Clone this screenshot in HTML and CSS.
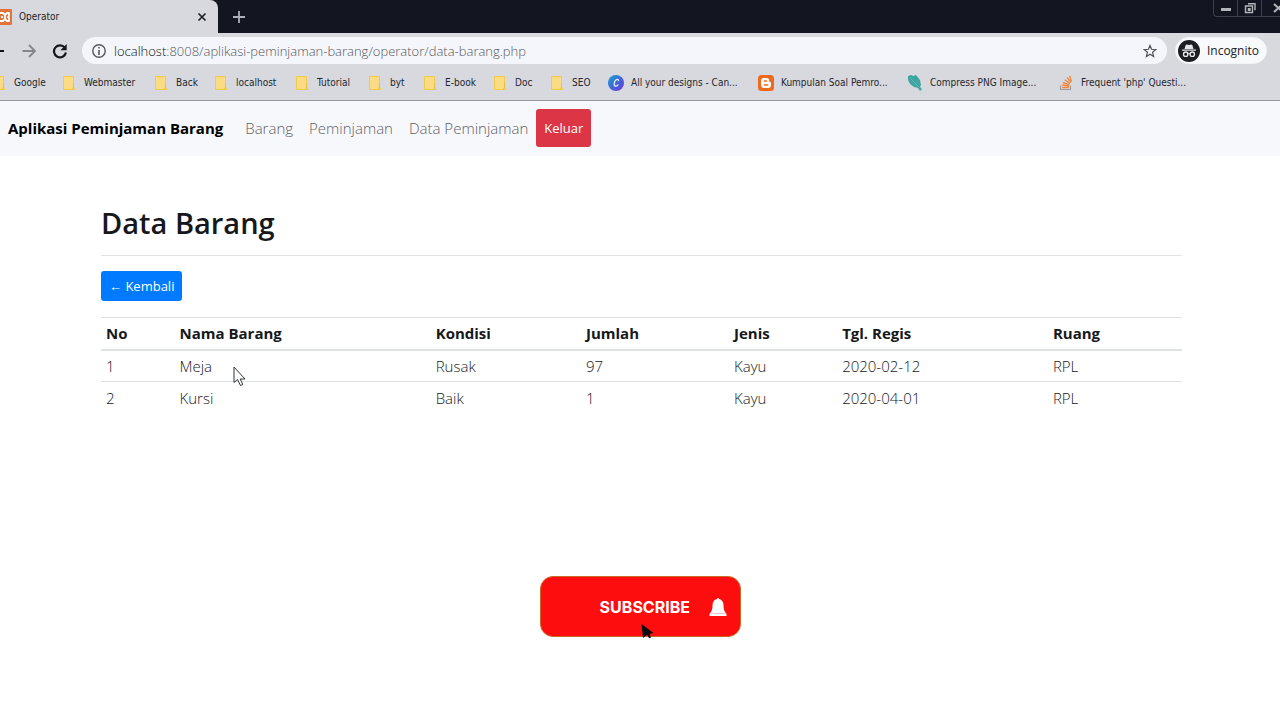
FILE: index.html
```html
<!DOCTYPE html>
<html lang="id">
<head>
<meta charset="utf-8">
<title>Operator</title>
<link rel="stylesheet" href="styles.css">
</head>
<body>
<svg class="defs" width="0" height="0" aria-hidden="true">
  <symbol id="folder" viewBox="0 0 16 16"><path d="M2.500 1.500h10v10.500l1.500 2.500h-11.500z" fill="#fbdc85" stroke="#f2cb4d"/><path d="M12.500 8v4l-1 2.500" fill="none" stroke="#e8bd3c"/></symbol>
</svg>
<header class="chrome">
  <div class="tabstrip">
    <div class="tab">
      <svg class="favicon" width="16" height="16" viewBox="0 0 16 16"><rect width="16" height="16" rx="1" fill="#e2733a"/><path d="M4 4h3l2 2 2-2h2v3l-1 1 1 1v3h-2l-2-2-2 2H4M5 8h2M9 6v4" fill="none" stroke="#fff" stroke-width="1.800" stroke-linejoin="round"/></svg>
      <span class="tab-title">Operator</span>
      <button class="plain" aria-label="Tutup tab"><svg width="10" height="10" viewBox="0 0 10 10"><path d="M1.500 1.500l7 7M8.500 1.500l-7 7" stroke="#202124" stroke-width="1.700"/></svg></button>
    </div>
    <button class="plain new-tab" aria-label="Tab baru"><svg width="14" height="14" viewBox="0 0 14 14"><path d="M7 1v12M1 7h12" stroke="#aeb0b8" stroke-width="1.800"/></svg></button>
    <div class="window-controls">
      <button class="win" aria-label="Minimalkan"><svg width="12" height="12" viewBox="0 0 12 12"><path d="M1 7.500h10" stroke="#b4b5ba" stroke-width="3"/></svg></button>
      <button class="win" aria-label="Pulihkan"><svg width="12" height="12" viewBox="0 0 12 12"><path d="M4 1.700h7v6.500M1.500 4h7v6.500h-7zM4.500 6.700h1.500v1.500h-1.500z" fill="none" stroke="#b4b5ba" stroke-width="1.400"/></svg></button>
      <button class="win win-close" aria-label="Tutup"><svg width="12" height="12" viewBox="0 0 12 12"><path d="M1 2l9 8M10 2l-9 8" stroke="#b4b5ba" stroke-width="2"/></svg></button>
    </div>
  </div>
  <div class="toolbar">
    <button class="plain back" aria-label="Kembali"><svg width="16" height="16" viewBox="0 0 16 16"><path d="M15 8H2M8 2L2 8l6 6" fill="none" stroke="#111217" stroke-width="2"/></svg></button>
    <button class="plain forward" aria-label="Maju"><svg width="16" height="16" viewBox="0 0 16 16"><path d="M1.500 8h12M8 2l6 6-6 6" fill="none" stroke="#85868b" stroke-width="1.800"/></svg></button>
    <button class="plain reload" aria-label="Muat ulang"><svg width="16" height="16" viewBox="0 0 16 16"><path d="M13 5A6 6 0 1 0 13.900 9.500" fill="none" stroke="#15161a" stroke-width="2.200"/><path d="M14.700 1v6.300H8.400z" fill="#15161a"/></svg></button>
    <form class="address">
      <svg width="14" height="14" viewBox="0 0 14 14"><circle cx="7" cy="7" r="6.200" fill="none" stroke="#56585e" stroke-width="1.400"/><path d="M7 3v1.600M7 6v5" stroke="#56585e" stroke-width="1.600"/></svg>
      <div class="url" role="textbox" aria-label="Alamat"><span class="host">localhost</span>:8008/aplikasi-peminjaman-barang/operator/data-barang.php</div>
      <button type="button" class="plain" aria-label="Tandai"><svg width="14" height="14" viewBox="0 0 14 14"><path d="M7 1.500l1.600 3.800 4.100.3-3.100 2.700 1 4.100L7 10.200l-3.600 2.200 1-4.100L1.300 5.600l4.100-.3z" fill="none" stroke="#4f5157" stroke-width="1.200"/></svg></button>
    </form>
    <button class="incognito"><svg width="22" height="22" viewBox="0 0 22 22"><circle cx="11" cy="11" r="11" fill="#1d1e22"/><path d="M6.500 9l1.200-4 1-.5 2.300.6 2.300-.6 1 .5 1.200 4zM4 9.500h14v1.300H4z" fill="#e8e8ea"/><circle cx="7.700" cy="14.200" r="2.200" fill="none" stroke="#e8e8ea" stroke-width="1.300"/><circle cx="14.300" cy="14.200" r="2.200" fill="none" stroke="#e8e8ea" stroke-width="1.300"/><path d="M9.500 14q1.500-1 3 0" fill="none" stroke="#e8e8ea"/></svg>Incognito</button>
  </div>
  <nav class="bookmarks" aria-label="Bookmark">
    <a href="#"><svg><use href="#folder"/></svg>Google</a>
    <a href="#"><svg><use href="#folder"/></svg>Webmaster</a>
    <a href="#"><svg><use href="#folder"/></svg>Back</a>
    <a href="#"><svg><use href="#folder"/></svg>localhost</a>
    <a href="#"><svg><use href="#folder"/></svg>Tutorial</a>
    <a href="#"><svg><use href="#folder"/></svg>byt</a>
    <a href="#"><svg><use href="#folder"/></svg>E-book</a>
    <a href="#"><svg><use href="#folder"/></svg>Doc</a>
    <a href="#"><svg><use href="#folder"/></svg>SEO</a>
    <a href="#"><svg viewBox="0 0 16 16"><defs><linearGradient id="canva" x1="0" y1="0" x2="1" y2="1"><stop offset="0" stop-color="#18a5cf"/><stop offset=".5" stop-color="#3f68d8"/><stop offset="1" stop-color="#7433dc"/></linearGradient></defs><circle cx="8" cy="8" r="8" fill="url(#canva)"/><path d="M10.500 6c.3-2-1.500-2-2.600-1C6 6.700 5.500 10.500 7.300 11c1.200.3 2.300-.5 3-1.500" fill="none" stroke="#e5efff" stroke-width="1.300"/></svg>All your designs - Can...</a>
    <a href="#"><svg viewBox="0 0 16 16"><rect width="16" height="16" rx="3.500" fill="#ef6a1d"/><path d="M6.200 3h2.300a2.700 2.700 0 0 1 2.700 2.700c0 .9.300 1.200 1 1.200.6 0 .8.400.8.900v2.300a2.900 2.900 0 0 1-2.900 2.900H6.200A3.200 3.200 0 0 1 3 9.800V6.200A3.200 3.200 0 0 1 6.200 3z" fill="#fff"/><path d="M6.300 6h2.200M6.300 10h3.500" stroke="#ef6a1d" stroke-width="1.400" stroke-linecap="round"/></svg>Kumpulan Soal Pemro...</a>
    <a href="#"><svg viewBox="0 0 16 16"><path d="M1 1l3-1 2 1 3-1 4 5 1 5-1 2 2 2-2 2-2-3-4-1-4-3-2-4z" fill="#3fa5a2"/><path d="M3 3l9 9" stroke="#72bfba" stroke-width=".7"/></svg>Compress PNG Image...</a>
    <a href="#"><svg viewBox="0 0 16 16"><path d="M2.500 10.500v4h10v-4" fill="none" stroke="#9c9ea3" stroke-width="1.200"/><path d="M4 12.500h7M4.200 10l6.800 1M5 7.500l6.300 2.300M6.800 4.700l5.200 4M9.200 2.300l3.500 5.200M11.800.8l1.600 6" stroke="#f08a45" stroke-width="1.400"/></svg>Frequent 'php' Questi...</a>
  </nav>
</header>
<nav class="navbar">
  <a class="brand" href="#">Aplikasi Peminjaman Barang</a>
  <a class="nav-link" href="#">Barang</a>
  <a class="nav-link" href="#">Peminjaman</a>
  <a class="nav-link" href="#">Data Peminjaman</a>
  <a class="btn btn-danger" href="#">Keluar</a>
</nav>
<main class="content">
  <h1>Data Barang</h1>
  <a class="btn btn-primary" href="#">← Kembali</a>
  <table>
    <colgroup><col class="c-no"><col class="c-name"><col class="c-cond"><col class="c-qty"><col class="c-kind"><col class="c-date"><col></colgroup>
    <thead><tr><th>No</th><th>Nama Barang</th><th>Kondisi</th><th>Jumlah</th><th>Jenis</th><th>Tgl. Regis</th><th>Ruang</th></tr></thead>
    <tbody>
      <tr><td>1</td><td>Meja</td><td>Rusak</td><td>97</td><td>Kayu</td><td>2020-02-12</td><td>RPL</td></tr>
      <tr><td>2</td><td>Kursi</td><td>Baik</td><td>1</td><td>Kayu</td><td>2020-04-01</td><td>RPL</td></tr>
    </tbody>
  </table>
</main>
<button class="subscribe">SUBSCRIBE<svg width="18" height="20" viewBox="0 0 18 20"><path d="M8 2a1 1 0 0 1 2 0c3 .7 4.500 3 4.500 6 0 4 .5 6 3 9v2H.500v-2c2.500-3 3-5 3-9C3.500 5 5 2.700 8 2z" fill="#fff"/><path d="M2 16.500h14" stroke="#ffb3b3" stroke-width=".8"/></svg></button>
<svg class="pointer pointer-light" width="13" height="21" viewBox="0 0 13 21"><path d="M1 1v15.500l3.500-3 3 6 2.300-1-2.600-5.500H12z" fill="#fff" stroke="#33343a"/></svg>
<svg class="pointer pointer-dark" width="13" height="15" viewBox="0 0 13 15"><path d="M.5 0L12.500 9l-4 .7 1.500 3.800-2 .8-1.800-3.700L2 14z" fill="#0a0a0a"/></svg>
</body>
</html>
```

FILE: styles.css
```css
* { box-sizing: border-box; }
body {
  margin: 0;
  background: #fff;
  color: #212529;
  font-family: "Open Sans", "Noto Sans", sans-serif;
  font-size: 15px;
  font-weight: 300;
  overflow: hidden;
}
a { text-decoration: none; color: inherit; }
svg { flex: none; display: block; }
.defs { position: absolute; }
.plain { border: 0; padding: 0; background: none; display: flex; }

.chrome { background: #d8d9de; border-bottom: 1px solid #96979d; font-family: "DejaVu Sans Condensed", "DejaVu Sans", sans-serif; }
.tabstrip { display: flex; height: 33px; background: #131520; }
.tab {
  display: flex;
  align-items: center;
  width: 218px;
  padding-right: 11px;
  background: #d8d9de;
  border-radius: 0 8px 0 0;
  font-size: 10px;
  font-weight: 400;
}
.favicon { margin-left: -4px; }
.tab-title { flex: 1; margin-left: 7px; }
.new-tab { align-items: center; margin-left: 14px; }
.window-controls { display: flex; height: 17px; margin: 0 -17px 0 auto; border: 1px solid #3d3f49; border-top: 0; border-radius: 0 0 4px 4px; }
.win { display: flex; align-items: center; justify-content: center; width: 24px; padding: 0; border: 0; border-right: 1px solid #3d3f49; background: none; }
.win-close { width: 34px; border-right: 0; }

.toolbar { display: flex; align-items: center; height: 35px; padding-right: 13px; }
.back { margin-left: -11px; }
.forward { margin-left: 16px; }
.reload { margin-left: 15px; }
.address {
  display: flex;
  flex: 1;
  align-items: center;
  height: 27px;
  margin: 0 8px 0 14px;
  padding: 0 10px;
  border-radius: 14px;
  background: #f4f6fb;
}
.url { flex: 1; margin-left: 8px; font-family: "Open Sans", sans-serif; font-size: 13px; color: #55575c; white-space: nowrap; }
.host { color: #111; }
.incognito {
  display: flex;
  align-items: center;
  gap: 7px;
  height: 27px;
  padding: 0 7px 0 2px;
  border: 1px solid #f2f3f6;
  border-radius: 14px;
  background: #f8f9fb;
  color: #202124;
  font: 400 12px "Open Sans", "Noto Sans", sans-serif;
}

.bookmarks {
  display: grid;
  grid-template-columns: 70px 92px 60px 81px 73px 55px 70px 57px 59px 150px 149px 151px 140px;
  align-items: center;
  height: 32px;
  margin-left: -9px;
  padding-bottom: 3px;
  font-size: 10px;
  font-weight: 400;
  color: #25262b;
}
.bookmarks a { display: flex; align-items: center; gap: 7px; white-space: nowrap; }
.bookmarks svg { width: 16px; height: 16px; }

.navbar { display: flex; align-items: center; height: 55px; padding: 0 8px 2px; background: #f7f8fc; }
.brand { margin-right: 14px; font-weight: 700; color: #000; }
.nav-link { padding: 0 8px; color: #606266; }
.btn { display: inline-flex; align-items: center; padding: 0 8px; border-radius: 3px; color: #fff; font-size: 13px; font-weight: 400; }
.btn-danger { height: 38px; background: #dc3545; }
.btn-primary { height: 30px; background: #007bff; }

.content { padding: 45px 98px 0 101px; }
h1 { margin: 0 0 15px; padding-bottom: 10px; border-bottom: 1px solid #e2e3e5; font-size: 29px; line-height: 44px; font-weight: 600; color: #16181c; }
table { width: 100%; margin-top: 16px; border-collapse: collapse; table-layout: fixed; }
th, td { height: 32px; padding: 0 5px; line-height: 22px; text-align: left; border-top: 1px solid #dee2e6; color: #16181c; }
th { font-weight: 700; border-bottom: 2px solid #dee2e6; }
.c-no { width: 6.8%; }
.c-name { width: 23.7%; }
.c-cond { width: 13.9%; }
.c-qty { width: 13.7%; }
.c-kind { width: 10%; }
.c-date { width: 19.5%; }

.subscribe {
  position: absolute;
  left: calc(50% - 100px);
  top: 576px;
  display: flex;
  align-items: center;
  justify-content: flex-end;
  gap: 19px;
  width: 201px;
  height: 61px;
  padding: 0 13px;
  border: 1px solid #c96a28;
  border-radius: 13px;
  background: #fd0d0d;
  color: #fff;
  font: 700 16px Inter, sans-serif;
}
.pointer { position: absolute; }
.pointer-light { left: 233px; top: 366px; }
.pointer-dark { left: 641px; top: 624px; }
```
